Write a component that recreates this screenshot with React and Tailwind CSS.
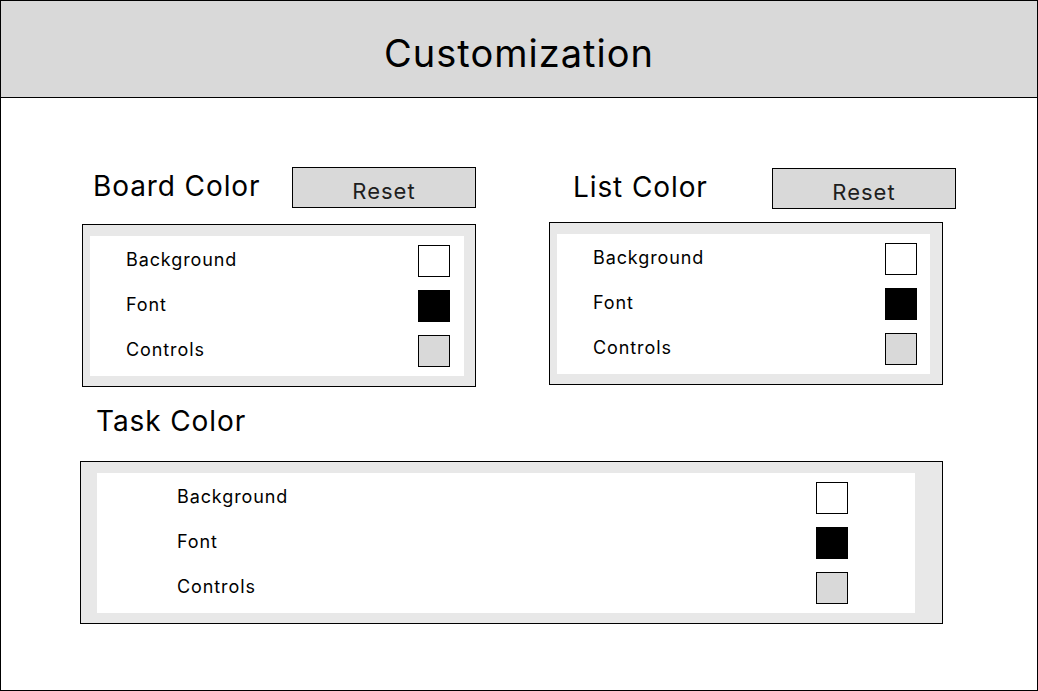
const rows = [
	{ label: "Background", color: "bg-white" },
	{ label: "Font", color: "bg-black" },
	{ label: "Controls", color: "bg-[#d9d9d9]" },
];

const ColorPanel = ({ className, innerClassName }) => (
	<div className={`border border-black bg-[#e8e8e8] pt-[11px] pb-[10px] ${className}`}>
		<div className={`flex flex-col gap-[13px] bg-white py-[9px] ${innerClassName}`}>
			{rows.map((row) => (
				<div key={row.label} className="flex h-[32px] items-center justify-between">
					<span className="pb-[3px] text-[18px] leading-[22px] tracking-[0.9px]">{row.label}</span>
					<div className={`h-[32px] w-[32px] border border-black ${row.color}`} />
				</div>
			))}
		</div>
	</div>
);

const ResetButton = () => (
	<button className="ml-auto flex h-[41px] w-[184px] items-center justify-center border border-black bg-[#d9d9d9] pt-[7px] text-[22px] leading-[26px] tracking-[1px] text-[#1e1e1e]">
		Reset
	</button>
);

const App = () => {
	return (
		<div className="h-[691px] w-[1038px] border border-black bg-white font-['Inter',sans-serif] text-black">
			<header className="flex h-[97px] items-center justify-center border-b border-black bg-[#d9d9d9] pt-[7px]">
				<h1 className="text-[38px] leading-[46px] tracking-[1px]">Customization</h1>
			</header>

			<main className="pt-[69px]">
				<div className="flex">
					<section className="ml-[81px] w-[394px]">
						<div className="flex h-[41px] items-center">
							<h2 className="ml-[11px] pb-[4px] text-[28px] leading-[34px] tracking-[0.9px]">Board Color</h2>
							<ResetButton />
						</div>
						<ColorPanel
							className="mt-[16px] pl-[7px] pr-[11px]"
							innerClassName="pl-[36px] pr-[14px]"
						/>
					</section>

					<section className="ml-[73px] mt-px w-[407px]">
						<div className="flex h-[41px] items-center">
							<h2 className="ml-[24px] pb-[4px] text-[28px] leading-[34px] tracking-[0.9px]">List Color</h2>
							<ResetButton />
						</div>
						<ColorPanel
							className="mt-[13px] w-[394px] pl-[7px] pr-[12px]"
							innerClassName="pl-[36px] pr-[13px]"
						/>
					</section>
				</div>

				<h2 className="ml-[95px] mt-[17px] text-[28px] leading-[34px] tracking-[0.9px]">Task Color</h2>
				<ColorPanel
					className="ml-[79px] mt-[23px] w-[863px] pl-[16px] pr-[27px]"
					innerClassName="pl-[80px] pr-[67px]"
				/>
			</main>
		</div>
	);
};

export default App;
